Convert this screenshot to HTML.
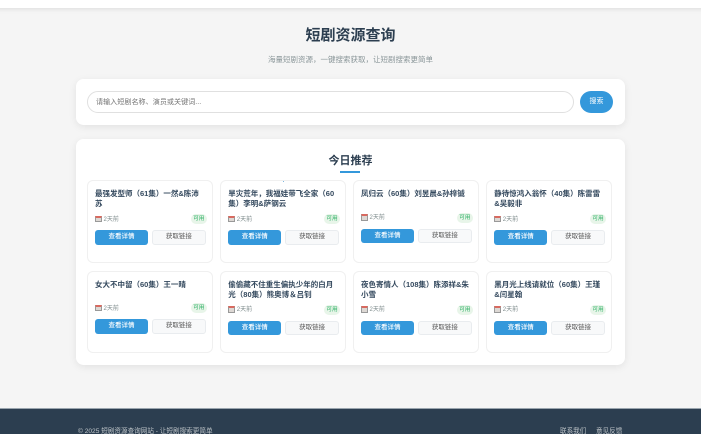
<!DOCTYPE html>
<html lang="zh-CN">
<head>
<meta charset="utf-8">
<title>短剧资源查询</title>
<style>
*{margin:0;padding:0;box-sizing:border-box}
html,body{width:701px;height:434px;overflow:hidden;background:#f5f5f5;font-family:"Liberation Sans","Noto Sans CJK SC",sans-serif}
#c{position:absolute;left:0;top:0;width:701px;height:434px;overflow:hidden;contain:strict}
#w{position:absolute;left:-10px;top:-10px;width:721px;height:454px;filter:blur(.3px);background:#f5f5f5}
#i{position:absolute;left:10px;top:10px;width:701px;height:434px}
.a{position:absolute;white-space:nowrap}
#top{left:-10px;top:-10px;width:721px;height:18px;background:#fff;box-shadow:0 1px 5px rgba(0,0,0,.1)}
#h1{left:0;width:701px;top:25px;line-height:22px;text-align:center;font-size:15px;font-weight:700;color:#2c3e50}
#sub{left:0;width:701px;top:53.5px;line-height:12px;text-align:center;font-size:7.5px;color:#8a9699}
.panel{position:absolute;left:76px;width:549px;background:#fff;border-radius:7.5px;box-shadow:0 2px 8px rgba(0,0,0,.08)}
#input{position:absolute;left:87px;top:91px;width:487px;height:22px;border:1px solid #e0e0e0;border-radius:11px;background:#fff;color:#757575;font-size:7.1px;line-height:20px;padding-left:8px}
#sbtn{position:absolute;left:580px;top:91px;width:33px;height:22px;border-radius:11px;background:#3498db;color:#fff;font-size:7px;line-height:22px;text-align:center}
#h2{left:0;width:701px;top:152.5px;line-height:17px;text-align:center;font-size:11px;font-weight:700;color:#2c3e50}
#ul{position:absolute;left:340px;top:171px;width:20px;height:1.5px;background:#3498db}
.card{position:absolute;width:126px;background:#fff;border:1px solid #f0f0f0;border-radius:6px}
.t{position:absolute;left:7px;top:8px;width:110.5px;font-size:7.5px;line-height:10px;font-weight:600;color:#34495e}
.cal{position:absolute;left:7px;width:6.5px;height:6.5px;background:#ddd8d4;border:.5px solid #999;border-top:2px solid #d9695f;border-radius:.5px}
.d{position:absolute;left:15.5px;font-size:6px;line-height:8px;color:#7f8c8d;white-space:nowrap}
.b{position:absolute;left:103px;width:15.5px;height:10px;border-radius:5px;background:#e8f5e9;color:#27ae60;font-size:5.7px;line-height:10px;text-align:center}
.v,.g{position:absolute;height:14.5px;border-radius:3px;font-size:6.5px;line-height:14.5px;text-align:center}
.v{left:7px;width:53px;background:#3498db;color:#fff;font-weight:500}
.g{left:63.7px;width:54.3px;background:#f8f9fa;border:1px solid #e9ecef;color:#555;line-height:12.5px}
.two .cal{top:34.5px}.two .d{top:34.5px}.two .b{top:33px}.two .v,.two .g{top:49px}
.one .cal{top:33px}.one .d{top:33px}.one .b{top:31.5px}.one .v,.one .g{top:47.5px}
#foot{position:absolute;left:-10px;top:408px;width:721px;height:36px;background:#2c3e50;border-top:.5px solid #9aa5ae}
.f{font-size:6.6px;line-height:10px;color:#bdc3c7;top:427px}
#dot{position:absolute;left:283px;top:180.5px;width:1px;height:1px;background:#7fb8e0}
</style>
</head>
<body>
<div id="c"><div id="w"><div id="i">
<div class="a" id="top"></div>
<div class="a" id="h1">短剧资源查询</div>
<div class="a" id="sub">海量短剧资源，一键搜索获取，让短剧搜索更简单</div>

<div class="panel" style="top:79px;height:46px"></div>
<div id="input">请输入短剧名称、演员或关键词...</div>
<div id="sbtn">搜索</div>

<div class="panel" style="top:139px;height:226px"></div>
<div class="a" id="h2">今日推荐</div>
<div id="ul"></div>

<div class="card two" style="left:87px;top:180.3px;height:83px"><div class="t">最强发型师（61集）一然&amp;陈沛苏</div><div class="cal"></div><div class="d">2天前</div><div class="b">可用</div><div class="v">查看详情</div><div class="g">获取链接</div></div>
<div class="card two" style="left:220.3px;top:180.3px;height:83px"><div class="t">旱灾荒年，我福娃带飞全家（60集）李明&amp;萨钢云</div><div class="cal"></div><div class="d">2天前</div><div class="b">可用</div><div class="v">查看详情</div><div class="g">获取链接</div></div>
<div class="card one" style="left:353px;top:180.3px;height:83px"><div class="t">凤归云（60集）刘昱晨&amp;孙梓铖</div><div class="cal"></div><div class="d">2天前</div><div class="b">可用</div><div class="v">查看详情</div><div class="g">获取链接</div></div>
<div class="card two" style="left:486.3px;top:180.3px;height:83px"><div class="t">静待惊鸿入翁怀（40集）陈雷雷&amp;吴毅非</div><div class="cal"></div><div class="d">2天前</div><div class="b">可用</div><div class="v">查看详情</div><div class="g">获取链接</div></div>

<div class="card one" style="left:87px;top:270.7px;height:82.6px"><div class="t">女大不中留（60集）王一晴</div><div class="cal"></div><div class="d">2天前</div><div class="b">可用</div><div class="v">查看详情</div><div class="g">获取链接</div></div>
<div class="card two" style="left:220.3px;top:270.7px;height:82.6px"><div class="t">偷偷藏不住重生偏执少年的白月光（80集）熊奥博＆吕钊</div><div class="cal"></div><div class="d">2天前</div><div class="b">可用</div><div class="v">查看详情</div><div class="g">获取链接</div></div>
<div class="card two" style="left:353px;top:270.7px;height:82.6px"><div class="t">夜色寄情人（108集）陈添祥&amp;朱小雪</div><div class="cal"></div><div class="d">2天前</div><div class="b">可用</div><div class="v">查看详情</div><div class="g">获取链接</div></div>
<div class="card two" style="left:486.3px;top:270.7px;height:82.6px"><div class="t">黑月光上线请就位（60集）王瑾&amp;闫星翰</div><div class="cal"></div><div class="d">2天前</div><div class="b">可用</div><div class="v">查看详情</div><div class="g">获取链接</div></div>
<div id="dot"></div>

<div id="foot"></div>
<div class="a f" style="left:78px">© 2025 短剧资源查询网站 - 让短剧搜索更简单</div>
<div class="a f" style="left:560px">联系我们</div>
<div class="a f" style="left:596px">意见反馈</div>
</div></div></div>
</body>
</html>
